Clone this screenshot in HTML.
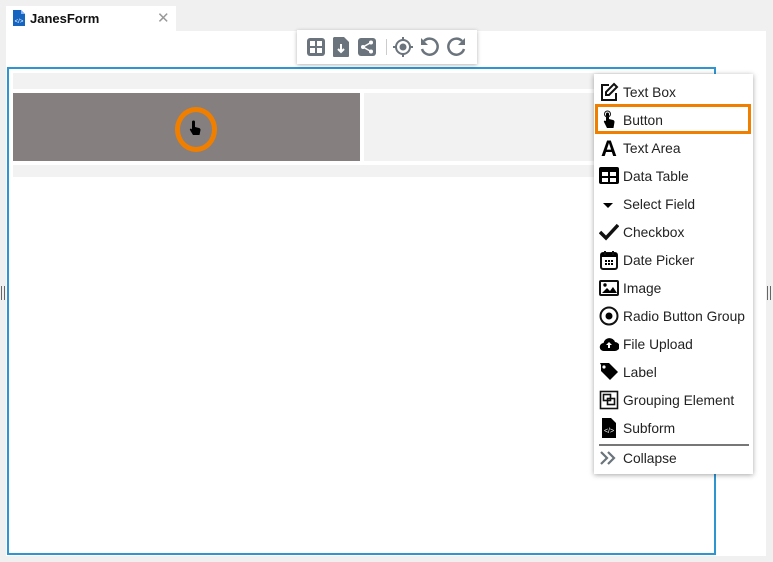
<!DOCTYPE html>
<html><head><style>
body{margin:0;width:773px;height:562px;background:#f0f0f0;position:relative;overflow:hidden;font-family:"Liberation Sans",sans-serif}
.a{position:absolute}
.menu .it{position:absolute;left:0;height:28px;width:159px;font-size:13.8px;color:#222}
.menu .it span{position:absolute;left:29px;top:7px}
.menu svg{position:absolute;left:5px;top:4px}
</style></head><body>
<div class="a" style="left:6px;top:6px;width:170px;height:26px;background:#fff"></div>
<svg class="a" style="left:13px;top:10px" width="12" height="16" viewBox="0 0 12 16"><path d="M0 0h8l4 4v12H0z" fill="#1565c0"/><path d="M8 0v4h4" fill="#8ab4f8"/><text x="6" y="13" font-size="6" fill="#fff" text-anchor="middle" font-family="Liberation Sans">&lt;/&gt;</text></svg>
<div class="a" style="left:30px;top:11px;font-size:13px;font-weight:bold;color:#111">JanesForm</div>
<div class="a" style="left:157px;top:9px;font-size:15px;color:#999">✕</div>
<div class="a" style="left:6px;top:31px;width:760px;height:525px;background:#fff"></div>
<div class="a" style="left:7px;top:67px;width:705px;height:484px;border:2px solid #2f95d0"></div>
<div class="a" style="left:13px;top:73px;width:700px;height:16px;background:#f2f2f2"></div>
<div class="a" style="left:13px;top:93px;width:347px;height:68px;background:#857f7f"></div>
<div class="a" style="left:364px;top:93px;width:349px;height:68px;background:#f2f2f2"></div>
<div class="a" style="left:13px;top:165px;width:700px;height:12px;background:#f2f2f2"></div>
<div class="a" style="left:175px;top:107px;border:5px solid #f07f00;border-radius:50%;box-sizing:border-box;width:42px;height:45px"></div>
<svg class="a" style="left:189px;top:120px" width="12" height="18" viewBox="0 0 12 18"><path d="M3 2a1.5 1.5 0 013 0v5l4 1c1 .3 1.5 1 1.5 2l-1 5H4L1 10c-.5-.8.5-1.8 1.3-1.2L3 9.5z" fill="#000"/></svg>
<div class="a" style="left:1px;top:286px;width:2px;height:14px;border-left:1px solid #666;border-right:1px solid #666;width:2px"></div>
<div class="a" style="left:767px;top:286px;width:2px;height:14px;border-left:1px solid #666;border-right:1px solid #666"></div>
<div class="a" style="left:297px;top:30px;width:180px;height:34px;background:#fff;box-shadow:0 1px 4px rgba(0,0,0,.3)"></div>
<svg class="a" style="left:305px;top:36px" width="165" height="22" viewBox="0 0 165 22" fill="#6b747c">
<rect x="2" y="2" width="18" height="18" rx="3"/><rect x="5" y="5" width="5" height="5" fill="#fff"/><rect x="12" y="5" width="5" height="5" fill="#fff"/><rect x="5" y="12" width="5" height="5" fill="#fff"/><rect x="12" y="12" width="5" height="5" fill="#fff"/>
<path d="M29 1h10l5 5v14a1 1 0 01-1 1H29a1 1 0 01-1-1V2z"/><path d="M36 8v8M33 13l3 3 3-3" stroke="#fff" stroke-width="2" fill="none"/>
<rect x="53" y="2" width="18" height="18" rx="3"/><circle cx="66" cy="6.5" r="2" fill="#fff"/><circle cx="58" cy="11" r="2" fill="#fff"/><circle cx="66" cy="15.5" r="2" fill="#fff"/><path d="M66 6.5L58 11l8 4.5" stroke="#fff" stroke-width="1.5" fill="none"/>
<rect x="81" y="3" width="1" height="16" fill="#ccc"/>
<circle cx="98" cy="11" r="7" fill="none" stroke-width="2" stroke="#6b747c"/><circle cx="98" cy="11" r="3.5"/><path d="M98 1v4M98 17v4M88 11h4M104 11h4" stroke="#6b747c" stroke-width="2"/>
<path d="M119 5a8 8 0 11-2 8" fill="none" stroke="#6b747c" stroke-width="2.5"/><path d="M116 2v7h7z"/>
<path d="M157 5a8 8 0 10 2 8" fill="none" stroke="#6b747c" stroke-width="2.5"/><path d="M160 2v7h-7z"/>
</svg>
<div class="a menu" style="left:594px;top:74px;width:159px;height:400px;background:#fff;box-shadow:0 1px 5px rgba(0,0,0,.35)">
<div class="it" style="top:4px"><svg width="20" height="20" viewBox="0 0 20 20"><path d="M10 3H3v15h14v-7" fill="none" stroke="#111" stroke-width="2"/><path d="M15 2l3 3-8 8H7v-3z" fill="none" stroke="#111" stroke-width="2"/></svg><span>Text Box</span></div>
<div class="it" style="top:32px"><svg width="20" height="20" viewBox="0 0 20 20"><path d="M7 4a1.5 1.5 0 013 0v5l4 1c1 .3 1.5 1 1.5 2l-1 6H8L5 12c-.5-.8.5-1.8 1.3-1.2L7 11z"/><circle cx="8.5" cy="4" r="3" fill="none" stroke="#111"/></svg><span>Button</span></div>
<div class="a" style="left:1px;top:30px;width:156px;height:30px;border:3px solid #f07f00;box-sizing:border-box"></div>
<div class="it" style="top:60px"><svg width="20" height="20" viewBox="0 0 20 20"><text x="10" y="18" font-size="22" font-weight="bold" text-anchor="middle" font-family="Liberation Sans">A</text></svg><span>Text Area</span></div>
<div class="it" style="top:88px"><svg width="20" height="20" viewBox="0 0 20 20"><rect x="0" y="1" width="20" height="17" rx="2"/><rect x="3" y="6" width="6" height="4" fill="#fff"/><rect x="11" y="6" width="6" height="4" fill="#fff"/><rect x="3" y="12" width="6" height="4" fill="#fff"/><rect x="11" y="12" width="6" height="4" fill="#fff"/></svg><span>Data Table</span></div>
<div class="it" style="top:116px"><svg width="20" height="20" viewBox="0 0 20 20"><path d="M4 9h10l-5 5z"/></svg><span>Select Field</span></div>
<div class="it" style="top:144px"><svg width="20" height="20" viewBox="0 0 20 20"><path d="M1 10l6 6L19 3" fill="none" stroke="#111" stroke-width="3.5"/></svg><span>Checkbox</span></div>
<div class="it" style="top:172px"><svg width="20" height="20" viewBox="0 0 20 20"><rect x="2" y="3" width="16" height="16" rx="2" fill="none" stroke="#111" stroke-width="2"/><rect x="2" y="3" width="16" height="4"/><path d="M6 1v4M14 1v4" stroke="#111" stroke-width="2"/><path d="M6 10h2v2H6zM9 10h2v2H9zM12 10h2v2h-2zM6 13h2v2H6zM9 13h2v2H9zM12 13h2v2h-2z"/></svg><span>Date Picker</span></div>
<div class="it" style="top:200px"><svg width="20" height="20" viewBox="0 0 20 20"><rect x="1" y="3" width="18" height="14" rx="1" fill="none" stroke="#111" stroke-width="2"/><circle cx="6" cy="7" r="1.7"/><path d="M3 15l5-5 3 3 3-4 4 6z"/></svg><span>Image</span></div>
<div class="it" style="top:228px"><svg width="20" height="20" viewBox="0 0 20 20"><circle cx="10" cy="10" r="8.5" fill="none" stroke="#111" stroke-width="2"/><circle cx="10" cy="10" r="3.5"/></svg><span>Radio Button Group</span></div>
<div class="it" style="top:256px"><svg width="20" height="20" viewBox="0 0 20 20"><path d="M5 17a4 4 0 01-.5-8A6 6 0 0116 8a4.5 4.5 0 010 9z"/><path d="M10 8l-3 3h2v3h2v-3h2z" fill="#fff"/></svg><span>File Upload</span></div>
<div class="it" style="top:284px"><svg width="20" height="20" viewBox="0 0 20 20"><path d="M1 1h9l9 9-8 8-9-9V3z"/><circle cx="5" cy="5" r="1.6" fill="#fff"/></svg><span>Label</span></div>
<div class="it" style="top:312px"><svg width="20" height="20" viewBox="0 0 20 20" fill="none" stroke="#111" stroke-width="1.6"><rect x="1.5" y="1.5" width="17" height="17"/><rect x="4.5" y="4.5" width="7" height="6"/><rect x="8.5" y="8.5" width="7" height="6"/></svg><span>Grouping Element</span></div>
<div class="it" style="top:340px"><svg width="20" height="20" viewBox="0 0 20 20"><path d="M3 0h9l5 5v15H3z"/><text x="10" y="15" font-size="7" fill="#fff" text-anchor="middle" font-family="Liberation Sans">&lt;/&gt;</text></svg><span>Subform</span></div>
<div class="a" style="left:5px;top:370px;width:150px;height:2px;background:#777"></div>
<div class="it" style="top:370px"><svg width="20" height="20" viewBox="0 0 20 20" fill="none" stroke="#6b747c" stroke-width="2.2"><path d="M2 4l6 6-6 6M9 4l6 6-6 6"/></svg><span>Collapse</span></div>
</div>
</body></html>
